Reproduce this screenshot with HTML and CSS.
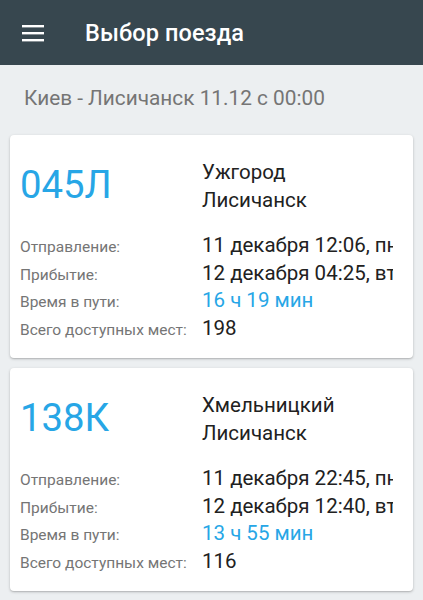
FILE: index.html
```html
<!DOCTYPE html>
<html lang="ru">
<head>
<meta charset="utf-8">
<link rel="stylesheet" href="styles.css">
</head>
<body>
<header class="appbar">
  <svg class="menu" width="22" height="18" viewBox="0 0 22 18">
    <rect x="0" y="1" width="22" height="2.4" fill="#fff"/>
    <rect x="0" y="8" width="22" height="2.4" fill="#fff"/>
    <rect x="0" y="15" width="22" height="2.4" fill="#fff"/>
  </svg>
  <h1 class="title">Выбор поезда</h1>
</header>
<main class="content">
  <div class="route">Киев - Лисичанск 11.12 с 00:00</div>

  <section class="card">
    <div class="top">
      <div class="num">045Л</div>
      <div class="cities"><div>Ужгород</div><div>Лисичанск</div></div>
    </div>
    <div class="rows">
      <div class="row"><span class="lab">Отправление:</span><span class="val">11 декабря 12:06, пн</span></div>
      <div class="row"><span class="lab">Прибытие:</span><span class="val">12 декабря 04:25, вт</span></div>
      <div class="row"><span class="lab">Время в пути:</span><span class="val blue">16 ч 19 мин</span></div>
      <div class="row"><span class="lab">Всего доступных мест:</span><span class="val">198</span></div>
    </div>
  </section>

  <section class="card">
    <div class="top">
      <div class="num">138К</div>
      <div class="cities"><div>Хмельницкий</div><div>Лисичанск</div></div>
    </div>
    <div class="rows">
      <div class="row"><span class="lab">Отправление:</span><span class="val">11 декабря 22:45, пн</span></div>
      <div class="row"><span class="lab">Прибытие:</span><span class="val">12 декабря 12:40, вт</span></div>
      <div class="row"><span class="lab">Время в пути:</span><span class="val blue">13 ч 55 мин</span></div>
      <div class="row"><span class="lab">Всего доступных мест:</span><span class="val">116</span></div>
    </div>
  </section>
</main>
</body>
</html>
```
FILE: styles.css
```css
* { box-sizing: border-box; }
html, body { margin: 0; padding: 0; }
body {
  background: #eceff1;
  font-family: Roboto, "Liberation Sans", sans-serif;
  width: 423px;
  height: 600px;
  overflow: hidden;
}
.appbar {
  height: 65px;
  background: #37474f;
  display: flex;
  align-items: center;
  padding-left: 22px;
}
.menu { display: block; margin-top: 1px; }
.title {
  margin: 0 0 0 41px;
  color: #fff;
  font-size: 23.5px;
  font-weight: 500;
  letter-spacing: 0.1px;
}
.content { padding: 0 10px; }
.route {
  color: #757575;
  font-size: 20.8px;
  height: 70px;
  line-height: 66px;
  padding-left: 14px;
}
.card {
  background: #fff;
  border-radius: 4px;
  box-shadow: 0 1px 3px rgba(0,0,0,0.22), 0 1px 1px rgba(0,0,0,0.08);
  padding: 16px 20px 12px 10px;
  margin-bottom: 10px;
  height: 223px;
  overflow: hidden;
}
.top {
  display: flex;
  align-items: center;
  height: 70px;
}
.num {
  width: 182px;
  color: #27a6e6;
  font-size: 38.3px;
  line-height: 44px;
  margin-top: -3px;
}
.cities {
  color: #212121;
  font-size: 20.5px;
  line-height: 28px;
}
.rows { margin-top: 11px; }
.row {
  display: flex;
  align-items: baseline;
  height: 27.5px;
  line-height: 27.5px;
  white-space: nowrap;
}
.lab {
  flex: 0 0 182px;
  color: #757575;
  font-size: 15.5px;
}
.val {
  flex: 1 1 auto;
  min-width: 0;
  overflow: hidden;
  color: #212121;
  font-size: 20.5px;
}
.val.blue { color: #27a6e6; }
```
